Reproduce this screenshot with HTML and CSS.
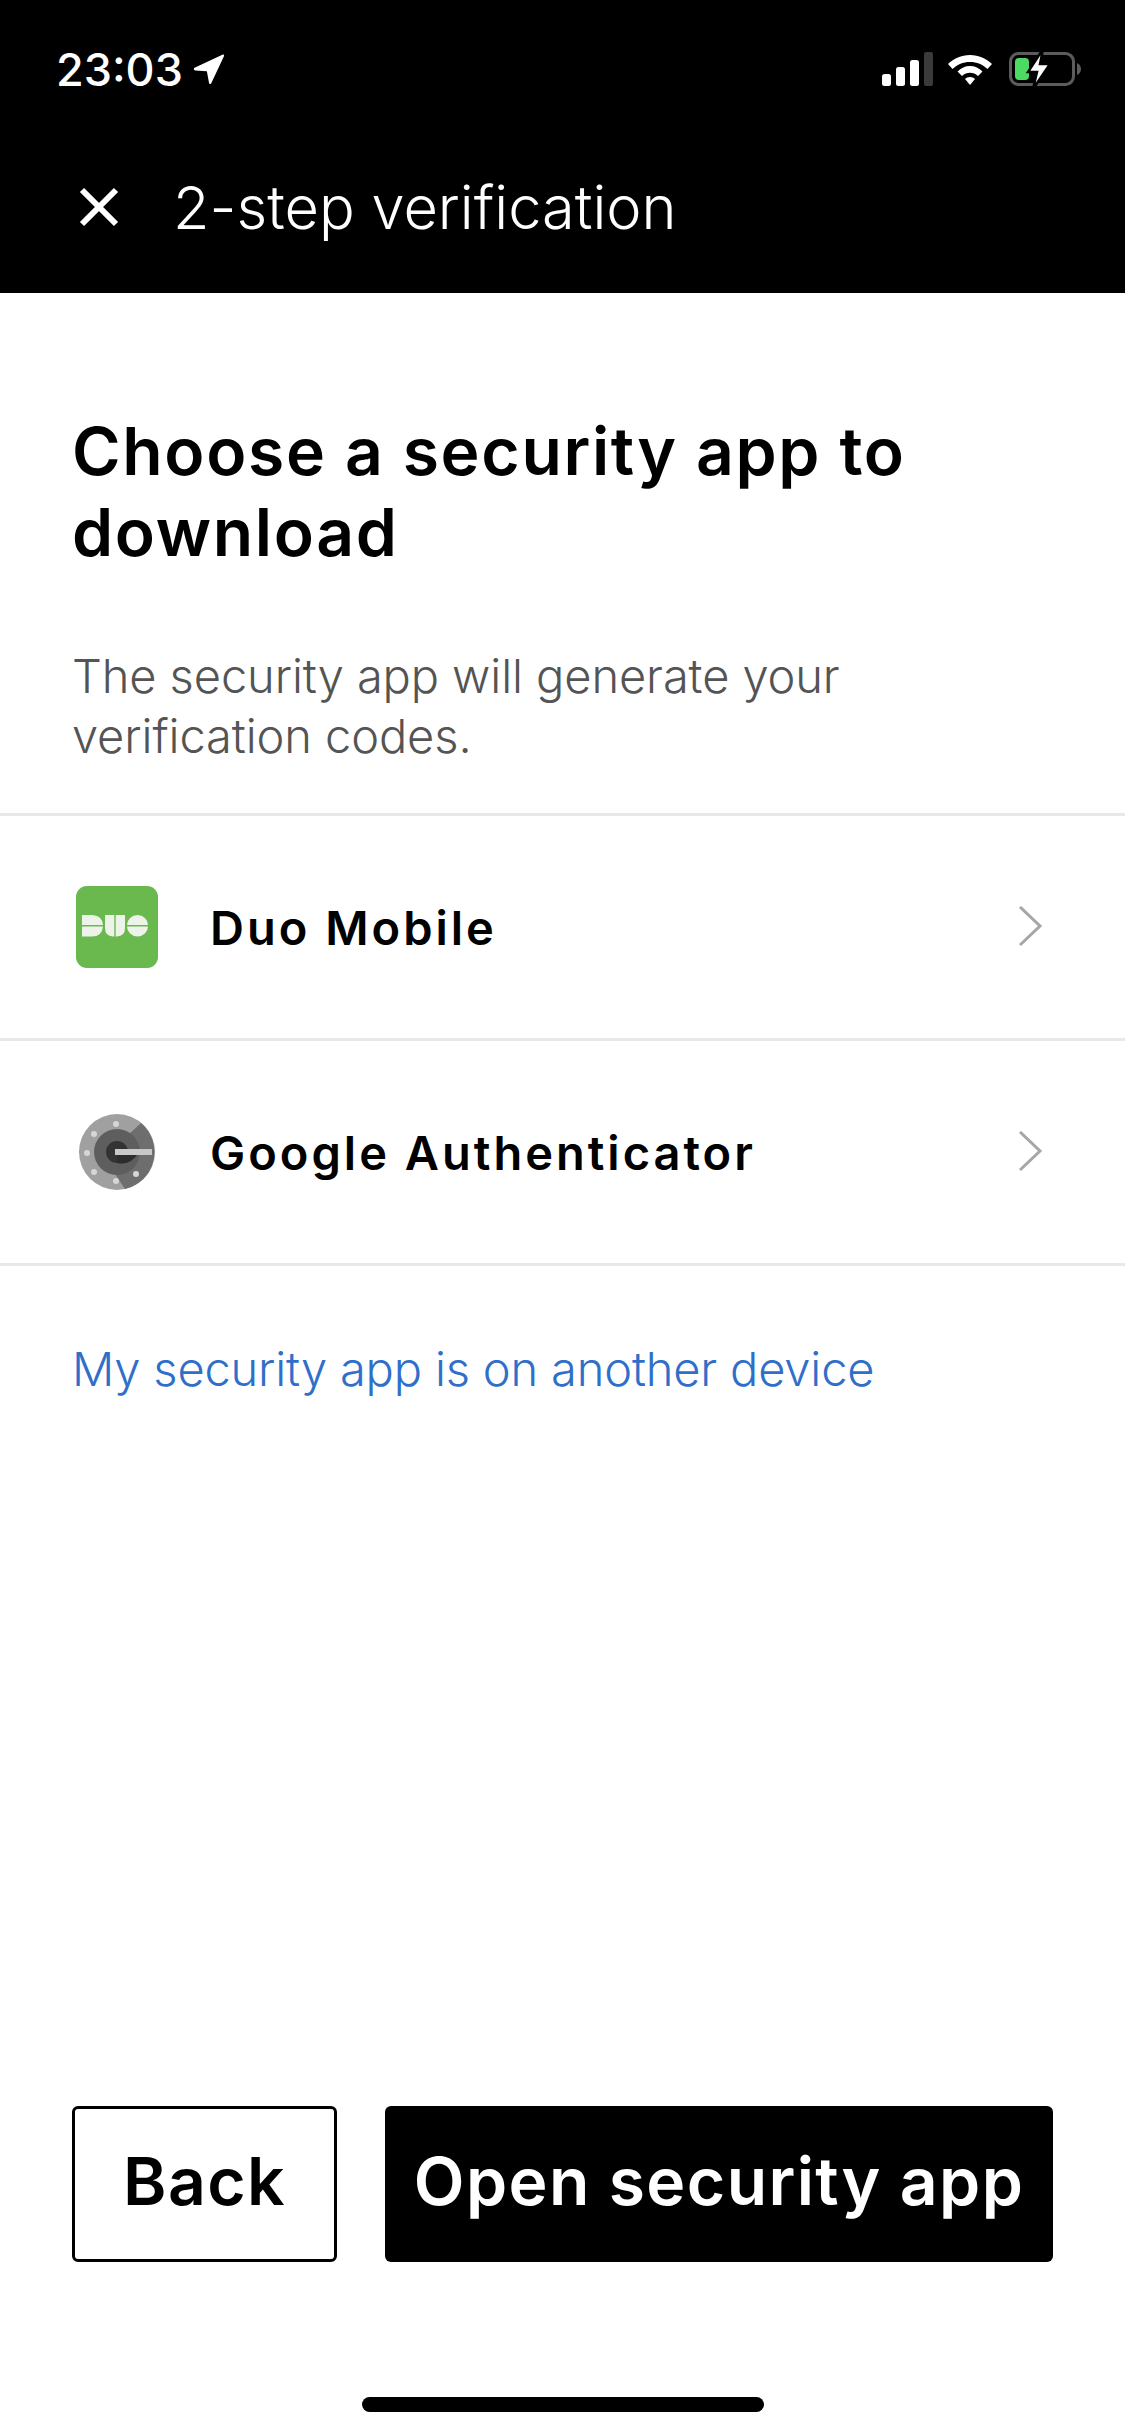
FILE: index.html
```html
<!DOCTYPE html>
<html lang="en">
<head>
    <meta charset="UTF-8">
    <meta name="viewport" content="width=device-width, initial-scale=1.0">
    <title>2-step verification</title>
    <link rel="stylesheet" href="styles.css">
</head>
<body>
    <div class="screen">
        <header class="top">
            <div class="status">
                <div class="status-left">
                    <span class="clock">23:03</span>
                    <svg class="arrow" viewBox="0 0 30 30" width="32" height="32"><path d="M1 14 L28 1.5 Q29.5 1 29 3 L17 28.5 Q15.5 30 15 28 L13 17 L2 16.5 Q0 15.5 1 14 Z" fill="#fff"/></svg>
                </div>
                <div class="status-right">
                    <svg viewBox="0 0 52 34" width="52" height="34"><rect x="0" y="22" width="9" height="12" rx="2.5" fill="#fff"/><rect x="14" y="15" width="9" height="19" rx="2.5" fill="#fff"/><rect x="28" y="8" width="9" height="26" rx="2.5" fill="#fff"/><rect x="42" y="0" width="9" height="34" rx="2" fill="#3a3a3a"/></svg>
                    <svg class="wifi" viewBox="0 0 46 34" width="46" height="34"><path d="M23 3 C32 3 39 6.5 45 12 L40.500 17 C35.500 12.500 30 10 23 10 C16 10 10.500 12.500 5.500 17 L1 12 C7 6.500 14 3 23 3 Z" fill="#fff"/><path d="M23 14 C28 14 32 16 35.500 19.500 L31 24 C28.500 22 26 20.800 23 20.800 C20 20.800 17.500 22 15 24 L10.500 19.500 C14 16 18 14 23 14 Z" fill="#fff"/><path d="M23 25 C25 25 26.800 25.800 28 27 L23 33 L18 27 C19.200 25.800 21 25 23 25 Z" fill="#fff"/></svg>
                    <svg viewBox="0 0 74 40" width="74" height="40"><rect x="1.500" y="4.500" width="63" height="31" rx="8" fill="none" stroke="#5c5c5c" stroke-width="3"/><rect x="6" y="9" width="14" height="22" rx="4" fill="#4cd964"/><path d="M68 14 Q72 16 72 20 Q72 24 68 26 Z" fill="#5c5c5c"/><path d="M34 0 L19 23 L28 23 L24 40 L41 15 L31 15 Z" fill="#fff" stroke="#000" stroke-width="2.500"/></svg>
                </div>
            </div>
            <div class="title-bar">
                <svg class="close" viewBox="0 0 40 40" width="40" height="40"><path d="M3 3 L37 37 M37 3 L3 37" stroke="#fff" stroke-width="6" fill="none"/></svg>
                <span class="title">2-step verification</span>
            </div>
        </header>

        <main class="content">
            <h1 class="heading">Choose a security app to download</h1>
            <p class="lead">The security app will generate your verification codes.</p>

            <div class="row first">
                <svg class="app-icon" viewBox="0 0 84 84" width="84" height="84">
                    <rect x="1" y="1" width="82" height="82" rx="11" fill="#69b94f"/>
                    <!-- D, U, O each split in two halves -->
                    <path d="M7 30 H17 Q27 30 28 40 H7 Z M7 41.500 H28 Q27 51.500 17 51.500 H7 Z" fill="#eef3ea"/>
                    <path d="M30 30 H39.300 V51.500 H38 Q30 51 30 43 Z M40.700 30 H50 V43 Q50 51 42 51.500 H40.700 Z" fill="#eef3ea"/>
                    <path d="M52 40 A10.500 10 0 0 1 73 40 Z M52 41.500 H73 A10.500 10 0 0 1 52 41.500 Z" fill="#eef3ea"/>
                </svg>
                <span class="app-name">Duo Mobile</span>
                <svg class="chevron" viewBox="0 0 26 42" width="26" height="42"><path d="M3 1 L23 20 L3 39" fill="none" stroke="#a6a6a6" stroke-width="3"/></svg>
            </div>
            <div class="row">
                <svg class="app-icon" viewBox="0 0 84 84" width="84" height="84">
                    <circle cx="42" cy="42" r="38" fill="#a0a0a0"/>
                    <path d="M66 13 A38 38 0 0 1 50 79 L36 58 L52 26 Z" fill="#6e6e6e"/>
                    <circle cx="42" cy="42" r="23" fill="#5e5e5e"/>
                    <path d="M42 31 A11 11 0 0 1 42 53 Z M42 31 A11 11 0 0 0 42 53 Z" fill="#333"/>
                    <path d="M42 53 Q56 56 64 42 H42 Z" fill="#2c2c2c"/>
                    <rect x="40" y="39" width="37" height="6" fill="#c8c8c8"/>
                    <g fill="#d6d6d6"><circle cx="41" cy="14" r="3"/><circle cx="19" cy="24" r="3"/><circle cx="12" cy="43" r="3"/><circle cx="19" cy="62" r="3"/><circle cx="41" cy="71" r="3"/><circle cx="61" cy="64" r="3"/></g>
                </svg>
                <span class="app-name">Google Authenticator</span>
                <svg class="chevron" viewBox="0 0 26 42" width="26" height="42"><path d="M3 1 L23 20 L3 39" fill="none" stroke="#a6a6a6" stroke-width="3"/></svg>
            </div>

            <a class="other-device" href="#">My security app is on another device</a>
        </main>

        <div class="actions">
            <button class="btn btn-back">Back</button>
            <button class="btn btn-open">Open security app</button>
        </div>
        <div class="home-bar"></div>
    </div>
</body>
</html>
```

FILE: styles.css
```css
* {
    box-sizing: border-box;
}

body {
    margin: 0;
    background-color: #fff;
    font-family: "Inter", "Liberation Sans", sans-serif;
    color: #000;
}

.screen {
    display: flex;
    flex-direction: column;
    height: 2436px;
    overflow: hidden;
}

.top {
    height: 293px;
    background-color: #000;
    color: #fff;
    flex-shrink: 0;
}

.status {
    display: flex;
    justify-content: space-between;
    align-items: center;
    height: 70px;
    margin-top: 34px;
    padding: 0 42px 0 56px;
}

.status-left {
    display: flex;
    align-items: center;
    gap: 10px;
}

.status-right {
    display: flex;
    align-items: center;
    gap: 13px;
}

.wifi {
    margin-right: 3px;
}

.clock {
    font-size: 45px;
    font-weight: 500;
}

.title-bar {
    display: flex;
    align-items: center;
    gap: 54px;
    padding: 68px 0 0 79px;
}

.title {
    font-size: 59.5px;
    font-weight: 300;
    line-height: 70px;
}

.content {
    padding-top: 118px;
}

.heading {
    margin: 0;
    padding: 0 72px;
    font-size: 66px;
    font-weight: 600;
    line-height: 81px;
    letter-spacing: 1.65px;
}

.lead {
    margin: 73px 0 0;
    padding: 0 72px;
    font-size: 47px;
    font-weight: 300;
    line-height: 60px;
    letter-spacing: -0.1px;
    color: #545454;
}

.row {
    display: flex;
    align-items: center;
    height: 225px;
    padding: 0 82px 0 75px;
    border-bottom: 3px solid #e8e8e8;
}

.row.first {
    margin-top: 47px;
    height: 228px;
    border-top: 3px solid #e8e8e8;
}

.app-name {
    flex: 1;
    margin-left: 51px;
    font-size: 47px;
    font-weight: 600;
    letter-spacing: 3px;
}

.other-device {
    display: block;
    margin: 73px 0 0 72px;
    font-size: 47px;
    font-weight: 300;
    line-height: 60px;
    letter-spacing: -0.17px;
    color: #2f6fc9;
    text-decoration: none;
}

.actions {
    display: flex;
    gap: 48px;
    margin-top: auto;
    padding: 0 72px;
}

.btn {
    height: 156px;
    border-radius: 6px;
    font-family: inherit;
    font-size: 66px;
    font-weight: 600;
    letter-spacing: 1.4px;
    padding: 0 0 6px;
}

.btn-back {
    width: 265px;
    background-color: #fff;
    color: #000;
    border: 3px solid #000;
}

.btn-open {
    width: 668px;
    background-color: #000;
    color: #fff;
    border: none;
}

.home-bar {
    flex-shrink: 0;
    align-self: center;
    width: 402px;
    height: 15px;
    margin: 135px 0 24px;
    border-radius: 8px;
    background-color: #000;
}
```
